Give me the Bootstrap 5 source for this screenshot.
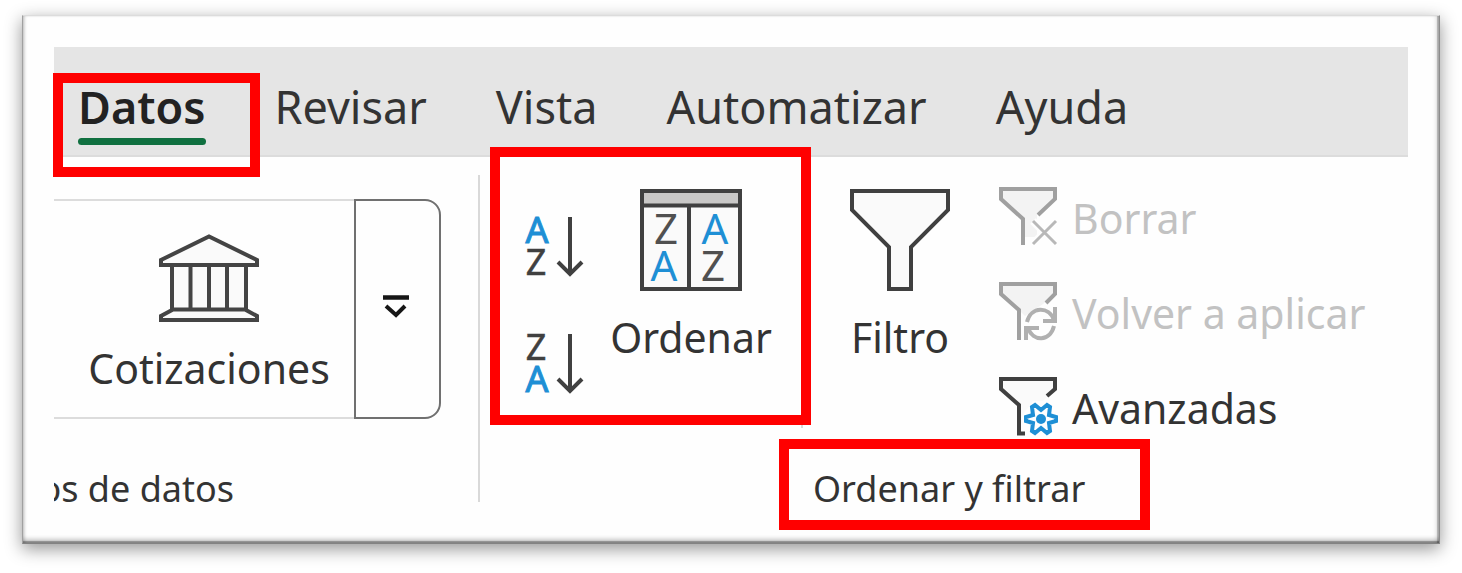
<!DOCTYPE html>
<html lang="es">
<head>
<meta charset="utf-8">
<meta name="viewport" content="width=device-width, initial-scale=1">
<title>Ordenar y filtrar</title>
<link href="https://cdn.jsdelivr.net/npm/bootstrap@5.3.0/dist/css/bootstrap.min.css" rel="stylesheet">
<style>
  body { background: #fff; color: #333; font-family: "Noto Sans", "Open Sans", sans-serif; }
  .sheet {
    margin: 15px 22px 28px; padding: 31px 31px 34px; background: #fefefe;
    border: 1px solid; border-color: #dcdcdc #8c8c8c #828282 #a0a0a0;
    box-shadow: 0 5px 16px rgba(0,0,0,.42),
      inset 0 -2px 1px rgba(0,0,0,.3), inset 0 -6px 4px -2px rgba(0,0,0,.22),
      inset -2px 0 1px rgba(0,0,0,.22), inset -5px 0 4px -2px rgba(0,0,0,.12),
      inset 3px 0 3px -1px rgba(0,0,0,.16);
  }
  .tabs { height: 110px; gap: 69px; padding: 32px 24px 0; background: #e5e5e5; border-bottom: 2px solid #dcdcdc; }
  .tab { color: #333; font-size: 45px; line-height: 56px; text-decoration: none; }
  .tab.current { color: #222; font-weight: 600; }
  .tab.current::after { content: ""; display: block; height: 7px; margin-top: 3px; border-radius: 4px; background: #107040; }
  .ribbon { padding-top: 18px; }
  .tool { padding: 0; border: 0; background: none; color: #333; font-size: 41px; line-height: 44px; white-space: nowrap; }
  .tool:disabled { color: #c2c2c2; }
  .tool svg, .more svg { display: block; flex: none; overflow: visible; }
  .types { width: 424px; }
  .gallery { margin-top: 24px; width: 387px; height: 220px; }
  .gallery .tool { border: solid #dcdcdc; border-width: 2px 0; padding: 33px 24px 0 34px; }
  .more { width: 87px; border: 2px solid #707070; border-radius: 0 16px 16px 0; background: #fefefe; padding: 0 4px 6px 0; }
  .group-name { font-size: 36px; line-height: 40px; white-space: nowrap; }
  .clipped { width: 180px; overflow: hidden; margin-top: 50px; }
  .rule { width: 2px; height: 327px; background: #d9d9d9; flex: none; }
  .short { height: 253px; margin: -12px 0 0 31px; }
  .tools { padding-top: 12px; height: 294px; }
  .sorts { padding: 28px 0 0 44px; gap: 55px; width: 132px; }
  .order { width: 158px; gap: 24px; padding-top: 2px; }
  .filter { gap: 24px; padding-top: 2px; width: 100px; margin-left: 47px; }
  .refine { gap: 37px; margin-left: 49px; }
  .refine .tool { gap: 15px; height: 58px; line-height: 54px; }
  .named { margin-left: 333px; }
  .mark-box { position: absolute; border: 10px solid #f00; pointer-events: none; }
  .on-tab { inset: -6px -54px -22px -25px; }
  .on-sort { left: 10px; top: -28px; width: 321px; height: 278px; }
  .on-name { inset: -30px -65px -21px -34px; }
</style>
</head>
<body>
<main class="sheet">
  <nav class="tabs d-flex" aria-label="Pestañas">
    <span class="position-relative"><a class="tab current d-block" href="#" aria-current="page">Datos</a><span class="mark-box on-tab"></span></span>
    <a class="tab" href="#">Revisar</a>
    <a class="tab" href="#">Vista</a>
    <a class="tab" href="#">Automatizar</a>
    <a class="tab" href="#">Ayuda</a>
  </nav>
  <div class="ribbon d-flex align-items-start">
    <section class="types flex-shrink-0">
      <div class="gallery d-flex">
        <button class="tool flex-grow-1 d-flex flex-column align-items-center" type="button">
          <svg class="mb-4" width="100" height="88" viewBox="0 0 100 88" fill="#fafafa" stroke="#444" stroke-width="4">
            <path d="M13 30H87V76H13Z"/><path d="M31.500 31V76M50 31V76M68 31V76" />
            <path d="M2 31V26L50 2.500 98 26V31Z"/><path d="M14 75.500H86L98 82V86H2V82Z"/>
          </svg>Cotizaciones</button>
        <button class="more d-flex align-items-center justify-content-center" type="button" aria-label="Más tipos">
          <svg width="28" height="24" viewBox="0 0 28 24" fill="none" stroke="#161616"><path d="M1 3.500H27" stroke-width="4.500"/><path d="M4 12L14 21 23 12" stroke-width="4"/></svg>
        </button>
      </div>
      <div class="group-name clipped d-flex justify-content-end">os de datos</div>
    </section>
    <div class="rule"></div>
    <section class="flex-grow-1 position-relative">
      <div class="tools d-flex align-items-start">
        <div class="sorts d-flex flex-column">
          <button class="tool" type="button" aria-label="Ordenar de A a Z">
            <svg width="62" height="62" viewBox="0 0 62 62" font-size="36" text-anchor="middle">
              <text x="13" y="28" fill="#1e8fd5" stroke="#1e8fd5">A</text><text x="12" y="60" fill="#404040" stroke="#404040" stroke-width=".5">Z</text>
              <path d="M46 2V58M34 47L46 59 58 47" fill="none" stroke="#404040" stroke-width="4"/>
            </svg></button>
          <button class="tool" type="button" aria-label="Ordenar de Z a A">
            <svg width="62" height="62" viewBox="0 0 62 62" font-size="36" text-anchor="middle">
              <text x="12" y="28" fill="#404040" stroke="#404040" stroke-width=".5">Z</text><text x="13" y="60" fill="#1e8fd5" stroke="#1e8fd5">A</text>
              <path d="M46 2V58M34 47L46 59 58 47" fill="none" stroke="#404040" stroke-width="4"/>
            </svg></button>
        </div>
        <button class="tool order d-flex flex-column align-items-center" type="button">
          <svg width="102" height="102" viewBox="0 0 102 102" font-size="42" text-anchor="middle">
            <path d="M2 2H100V100H2Z" fill="#fafafa"/><path d="M2 2H100V16H2Z" fill="#c9c8c7"/>
            <path d="M2 2H100V100H2ZM2 16.500H100M49 17V100" fill="none" stroke="#404040" stroke-width="4"/>
            <text x="26" y="55" fill="#505050">Z</text><text x="75" y="55" fill="#1e8fd5">A</text>
            <text x="24" y="92" fill="#1e8fd5">A</text><text x="73" y="92" fill="#505050">Z</text>
          </svg>Ordenar</button>
        <div class="rule short"></div>
        <button class="tool filter d-flex flex-column align-items-center" type="button">
          <svg width="100" height="102" viewBox="0 0 100 102"><path d="M2 2H98V21L61 58V100H39V58L2 21Z" fill="#fafafa" stroke="#404040" stroke-width="4"/></svg>
          Filtro</button>
        <div class="refine d-flex flex-column align-items-start">
          <button class="tool d-flex align-items-end" type="button" disabled>
            <svg width="58" height="58" viewBox="0 0 58 58" fill="none" stroke="#a0a0a0" stroke-width="4">
              <path d="M2 2H56V12L38 28V50H24V32L2 12Z" fill="#f3f3f3" stroke="none"/><path d="M24 58V32L2 12V2H56V12L39 28"/>
              <path d="M34 34L57 57M57 34L34 57" stroke="#fefefe" stroke-width="8"/><path d="M34 34L57 57M57 34L34 57" stroke="#b8b8b8" stroke-width="3"/>
            </svg>Borrar</button>
          <button class="tool d-flex align-items-end" type="button" disabled>
            <svg width="58" height="58" viewBox="0 0 58 58" fill="none" stroke="#a0a0a0" stroke-width="4">
              <path d="M2 2H56V12L44 22 26 34 20 28 2 12Z" fill="#f3f3f3" stroke="none"/><path d="M20 58V28L2 12V2H56V12L47 21"/>
              <path d="M28 40C32 24 50 24 55 38M56 25V39H44M55 44C51 60 34 60 29 46M27 58V46H40" stroke="#b0b0b0"/>
            </svg>Volver a aplicar</button>
          <button class="tool d-flex align-items-end" type="button">
            <svg width="58" height="58" viewBox="0 0 58 58" fill="none" stroke="#404040" stroke-width="4">
              <path d="M2 2H56V12L44 24H34L22 40V28L2 12Z" fill="#fafafa" stroke="none"/><path d="M26 56.500H20V28L2 12V2H56V12L48 19"/>
              <path d="M57 40V44L50 46 51 54 48 56 42 51 36 56 33 54 34 46 27 44V40L34 38 33 30 36 28 42 33 48 28 51 30 50 38Z" stroke="#1e8fd5"/>
              <circle cx="42" cy="42" r="5" fill="#1e8fd5" stroke="none"/>
            </svg>Avanzadas</button>
        </div>
      </div>
      <div class="d-flex">
        <span class="group-name named position-relative">Ordenar y filtrar<span class="mark-box on-name"></span></span>
      </div>
      <span class="mark-box on-sort"></span>
    </section>
  </div>
</main>
<script src="https://cdn.jsdelivr.net/npm/bootstrap@5.3.0/dist/js/bootstrap.bundle.min.js"></script>
</body>
</html>
